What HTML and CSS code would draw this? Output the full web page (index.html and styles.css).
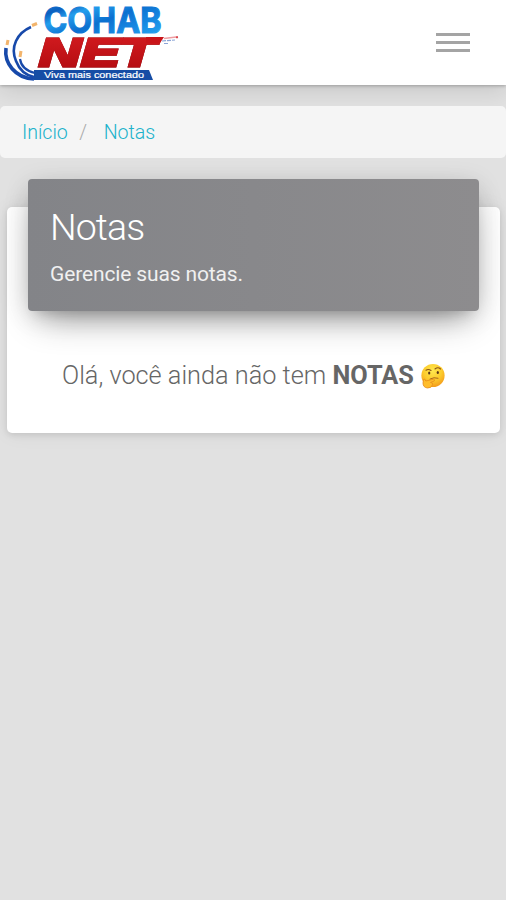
FILE: index.html
```html
<!DOCTYPE html>
<html lang="pt-BR">
<head>
<meta charset="utf-8">
<meta name="viewport" content="width=device-width, initial-scale=1">
<title>Notas</title>
<link rel="stylesheet" href="styles.css">
</head>
<body>
<header class="navbar">
  <a class="brand" href="#">
    <svg class="logo" width="190" height="85" viewBox="0 0 190 85">
      <defs>
        <linearGradient id="blue" x1="0" y1="0" x2="1" y2="1">
          <stop offset="0" stop-color="#168ee2"/><stop offset=".2" stop-color="#0b60c0"/>
          <stop offset=".32" stop-color="#239eed"/><stop offset=".52" stop-color="#0c70d0"/>
          <stop offset=".7" stop-color="#1686e0"/><stop offset="1" stop-color="#2cb0f7"/>
        </linearGradient>
        <linearGradient id="red" x1="0" y1="0" x2="0" y2="1">
          <stop offset="0" stop-color="#d51c20"/><stop offset="1" stop-color="#b10b10"/>
        </linearGradient>
      </defs>
      <g fill="none" stroke="#1749aa">
        <path d="M31 27C17 33 10 47 16 61C19 69 25 75 34 77" stroke-width="2.6"/>
        <path d="M6 48C4 63 15 78 34 79" stroke-width="3.6"/>
        <path d="M20 59C21 66 26 71 35 73" stroke-width="2.2"/>
      </g>
      <g fill="none" stroke="#f2b46c" stroke-width="3">
        <path d="M32 25.5L37 23.5"/><path d="M7 45L8 40"/><path d="M20 57L21 51"/>
      </g>
      <text class="logo-cohab" x="43.5" y="32.5" textLength="118" lengthAdjust="spacingAndGlyphs">COHAB</text>
      <text class="logo-net" x="39" y="66" textLength="116" lengthAdjust="spacingAndGlyphs">NET</text>
      <path d="M146 37H164L160 43H146Z" fill="#c91419"/>
      <path d="M164 38.5L178 36.8" stroke="#ef9ca0" stroke-width="1.4"/>
      <path d="M162 41L175 40M164 43.5L169 43.5" stroke="#8aa4d6" stroke-width="1.2" stroke-dasharray="4 1"/>
      <circle cx="177" cy="37.3" r="1.1" fill="#d6444b"/>
      <path d="M34 70H149L153 80H34Z" fill="#164da5"/>
      <text class="logo-tag" x="44" y="78" textLength="100" lengthAdjust="spacingAndGlyphs">Viva mais conectado</text>
    </svg>
  </a>
  <button class="menu" aria-label="Menu"><span></span><span></span><span></span></button>
</header>
<nav class="breadcrumb"><a href="#">Início</a><span class="sep">/</span><a href="#">Notas</a></nav>
<main class="card">
  <div class="card-header">
    <h1>Notas</h1>
    <p>Gerencie suas notas.</p>
  </div>
  <p class="empty">
    <span class="message">Olá, você ainda não tem <b>NOTAS</b></span>
    <svg class="emoji" width="26" height="26" viewBox="0 0 26 26">
      <defs>
        <radialGradient id="face" cx=".48" cy=".3" r=".72">
          <stop offset="0" stop-color="#ffe850"/><stop offset=".55" stop-color="#fccb2c"/><stop offset="1" stop-color="#f39719"/>
        </radialGradient>
      </defs>
      <circle cx="13" cy="12.5" r="11.6" fill="url(#face)"/>
      <path d="M6 7.2Q8.5 5.7 11 7.5M15 6Q18 3.6 20.5 6" fill="none" stroke="#8a5217" stroke-width="1.1" stroke-linecap="round"/>
      <ellipse cx="9.2" cy="10" rx="1.1" ry="1.5" fill="#59351a"/>
      <ellipse cx="17.8" cy="9.5" rx="1.1" ry="1.5" fill="#59351a"/>
      <path d="M10 16Q14 13.8 18 15.2" fill="none" stroke="#a8651c" stroke-width="1" stroke-linecap="round"/>
      <path d="M3.5 16.5Q4.8 15 5.8 18L13.5 16.2Q15.3 16.5 14.2 18L10.5 19.4Q13.2 19.7 12.5 21.7Q11.6 25.2 7.5 25Q3 24.5 3 20Z" fill="#ffbd2b" stroke="#e58a1c" stroke-width=".8"/>
    </svg>
  </p>
</main>
</body>
</html>
```
FILE: styles.css
```css
* { box-sizing: border-box; }
body {
  margin: 0;
  min-height: 900px;
  background: #e1e1e1;
  font-family: Roboto, "Liberation Sans", sans-serif;
  font-weight: 300;
}
a { color: #20b2cb; text-decoration: none; }
h1, p { margin: 0; font-weight: 300; }
.navbar {
  display: flex;
  align-items: center;
  justify-content: space-between;
  height: 85px;
  padding-right: 36px;
  background: #fff;
  box-shadow: 0 1px 3px rgba(0, 0, 0, .24), 0 5px 22px rgba(0, 0, 0, .13);
}
.brand, .logo { display: block; }
.logo-cohab {
  font: 700 36px Inter, "Liberation Sans", sans-serif;
  fill: url(#blue);
  stroke: url(#blue);
  stroke-width: 1.2px;
}
.logo-net {
  font: italic 700 39px "Liberation Sans", sans-serif;
  fill: url(#red);
  stroke: url(#red);
  stroke-width: 2.8px;
  filter: drop-shadow(.6px .6px 0 #7c1014);
}
.logo-tag { font: 400 8.5px "Liberation Sans", sans-serif; fill: #fff; stroke: #fff; stroke-width: .2px; }
.menu {
  display: flex;
  flex-direction: column;
  gap: 5.4px;
  width: 34px;
  padding: 0;
  border: 0;
  background: none;
}
.menu span { height: 3px; background: #a4a4a4; }
.breadcrumb {
  display: flex;
  align-items: center;
  height: 52px;
  margin-top: 21px;
  padding: 0 22px;
  border-radius: 5px;
  background: #f5f5f5;
  font-size: 19.6px;
}
.sep { margin: 0 16.5px 0 11.5px; color: #aaa; }
.card {
  height: 226px;
  margin: 49px 6px 0 7px;
  padding: 0 21px;
  border-radius: 5px;
  background: #fff;
  box-shadow: 0 2px 6px rgba(0, 0, 0, .1), 0 1px 20px rgba(0, 0, 0, .06);
}
.card-header {
  height: 132px;
  padding: 26px 22px 0;
  border-radius: 4px;
  background: linear-gradient(90deg, #838488, #8d8c8e);
  box-shadow: 0 16px 36px -12px rgba(0, 0, 0, .46), 0 5px 26px rgba(0, 0, 0, .12), 0 8px 12px -8px rgba(0, 0, 0, .16);
  color: #fff;
  transform: translateY(-28px);
}
h1 { font-size: 37.5px; line-height: 45px; letter-spacing: -.9px; }
.card-header p { margin-top: 11px; font-size: 21px; line-height: 26px; font-weight: 400; letter-spacing: -.14px; color: #f0f0f0; }
.empty {
  display: flex;
  align-items: center;
  margin: 21px 0 0 34px;
  color: #666;
  font-size: 25.3px;
  line-height: 32px;
  white-space: nowrap;
}
.empty b { font-weight: 700; }
.emoji { margin-left: 6px; }
```
